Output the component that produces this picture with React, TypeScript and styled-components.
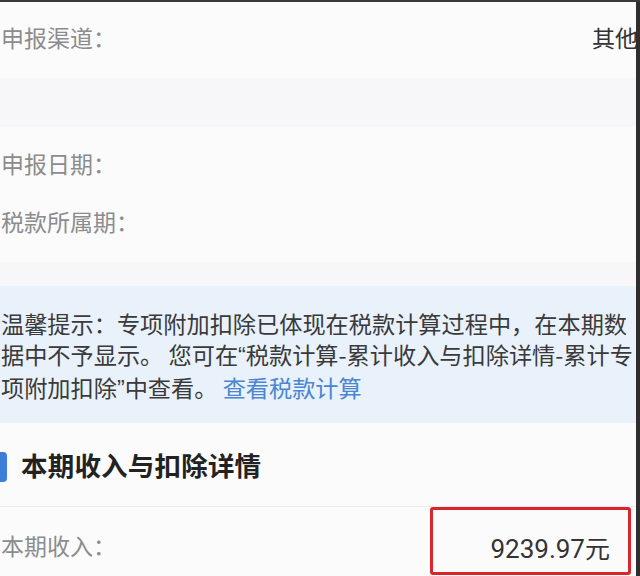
import React from 'react';
import styled, { createGlobalStyle } from 'styled-components';

const GlobalStyle = createGlobalStyle`
  html, body {
    margin: 0;
    padding: 0;
    background: #fbfbfc;
  }
  body {
    font-family: "Noto Sans CJK SC", "Noto Sans", Roboto, sans-serif;
  }
`;

const Screen = styled.div`
  display: flex;
  width: 640px;
  height: 576px;
  overflow: hidden;
  border-top: 2px solid #3a3a3a;
  box-sizing: border-box;
  background: #fbfbfc;
`;

const Content = styled.div`
  flex: 1;
  display: flex;
  flex-direction: column;
  min-width: 0;
  overflow: hidden;
`;

const EdgeStrip = styled.div`
  width: 4px;
  flex-shrink: 0;
  background: #2e2e2e;
`;

const Section = styled.div<{ padTop?: number; padBottom?: number }>`
  display: flex;
  flex-direction: column;
  background: #fbfbfc;
  padding-top: ${p => p.padTop ?? 0}px;
  padding-bottom: ${p => p.padBottom ?? 0}px;
`;

const Gap = styled.div<{ size: number }>`
  height: ${p => p.size}px;
  background: #f7f7f9;
`;

const Row = styled.div<{ height: number }>`
  display: flex;
  align-items: center;
  justify-content: space-between;
  height: ${p => p.height}px;
  padding-left: 1px;
`;

const Label = styled.span`
  font-size: 23px;
  color: #8c8c8c;
  white-space: nowrap;
`;

const Value = styled.span`
  font-size: 23px;
  color: #333;
  white-space: nowrap;
  margin-right: -2px;
`;

const Tip = styled.div`
  background: #e9f1fb;
  padding: 22px 0 18px 1px;
  font-size: 23.2px;
  line-height: 31px;
  color: #3a3a3a;
  white-space: nowrap;
`;

const Quote = styled.span`
  font-family: "Liberation Sans", Arial, sans-serif;
`;

const TipLink = styled.span`
  color: #4a86d2;
`;

const SectionHeader = styled.div`
  display: flex;
  align-items: center;
  gap: 14px;
  height: 85px;
  border-bottom: 1px solid #ececee;
`;

const HeaderBar = styled.span`
  width: 7px;
  height: 30px;
  margin-top: 5px;
  border-radius: 0 4px 4px 0;
  background: #3b7dd8;
`;

const HeaderTitle = styled.span`
  font-size: 26.5px;
  font-weight: 700;
  color: #222;
  letter-spacing: 0.2px;
`;

const IncomeRow = styled.div`
  display: flex;
  justify-content: space-between;
  align-items: center;
  height: 70px;
  padding-left: 1px;
`;

const IncomeLabel = styled(Label)`
  padding-top: 6px;
`;

const HighlightBox = styled.div`
  box-sizing: border-box;
  display: flex;
  align-items: center;
  justify-content: flex-end;
  width: 201px;
  height: 68px;
  margin: -1px 5px 0 0;
  padding: 12px 18px 0 0;
  border: 3px solid #d8262c;
  border-radius: 3px;
`;

const Amount = styled.span`
  font-family: Roboto, "Noto Sans CJK SC", sans-serif;
  font-size: 26px;
  color: #333;
  white-space: nowrap;
`;

const AmountUnit = styled.span`
  font-family: "Noto Sans CJK SC", sans-serif;
  font-size: 25px;
`;

const App: React.FC = () => {
  return (
    <>
      <GlobalStyle />
      <Screen>
        <Content>
          <Section padBottom={6}>
            <Row height={70}>
              <Label>申报渠道：</Label>
              <Value>其他</Value>
            </Row>
          </Section>
          <Gap size={50} />
          <Section padTop={7} padBottom={12}>
            <Row height={58}>
              <Label>申报日期：</Label>
            </Row>
            <Row height={58}>
              <Label>税款所属期：</Label>
            </Row>
          </Section>
          <Gap size={24} />
          <Tip>
            温馨提示：专项附加扣除已体现在税款计算过程中，在本期数
            <br />
            据中不予显示。 您可在<Quote>“</Quote>税款计算-累计收入与扣除详情-累计专
            <br />
            项附加扣除<Quote>”</Quote>中查看。 <TipLink>查看税款计算</TipLink>
          </Tip>
          <SectionHeader>
            <HeaderBar />
            <HeaderTitle>本期收入与扣除详情</HeaderTitle>
          </SectionHeader>
          <IncomeRow>
            <IncomeLabel>本期收入：</IncomeLabel>
            <HighlightBox>
              <Amount>
                9239.97<AmountUnit>元</AmountUnit>
              </Amount>
            </HighlightBox>
          </IncomeRow>
        </Content>
        <EdgeStrip />
      </Screen>
    </>
  );
};

export default App;
